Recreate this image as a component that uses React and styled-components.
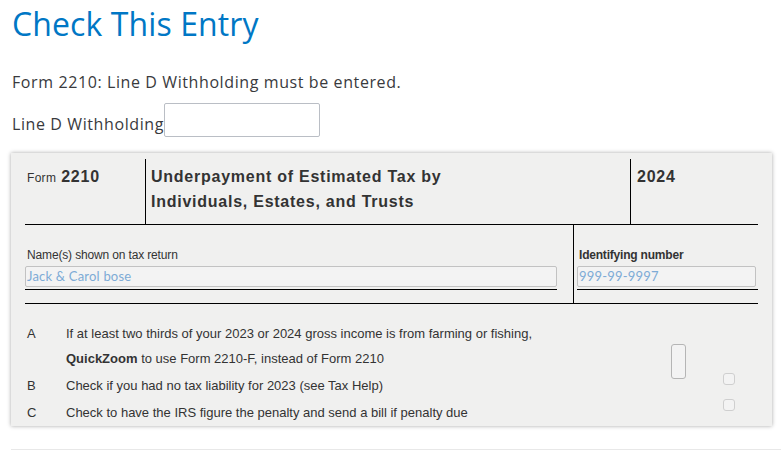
import React from 'react';
import styled, { createGlobalStyle } from 'styled-components';

const GlobalStyle = createGlobalStyle`
	body {
		margin: 0;
		background: #ffffff;
		font-family: 'Open Sans', sans-serif;
	}
`;

const Page = styled.div`
	width: 781px;
	height: 459px;
	overflow: hidden;
	padding-left: 11px;
	box-sizing: border-box;
`;

const Title = styled.h1`
	margin: 4px 0 0 1px;
	font-family: 'Open Sans', sans-serif;
	font-weight: 400;
	font-size: 32px;
	line-height: 40px;
	letter-spacing: 0.1px;
	color: #0077c5;
`;

const Message = styled.p`
	margin: 27px 0 0 1px;
	font-size: 16px;
	line-height: 22px;
	letter-spacing: 0.6px;
	color: #393a3d;
`;

const FieldRow = styled.div`
	display: flex;
	align-items: flex-end;
	margin: 10px 0 0 1px;
`;

const FieldLabel = styled.span`
	font-size: 16px;
	line-height: 22px;
	letter-spacing: 0.6px;
	color: #393a3d;
	margin-bottom: 2px;
`;

const TextBox = styled.input`
	width: 156px;
	height: 34px;
	box-sizing: border-box;
	border: 1px solid #babec5;
	border-radius: 2px;
	background: #fff;
	margin: 0;
`;

const Panel = styled.div`
	margin-top: 16px;
	width: 761px;
	height: 273px;
	box-sizing: border-box;
	background: #f0f0ef;
	box-shadow: 0 0 4px rgba(0, 0, 0, 0.35);
	padding: 6px 14px 0 14px;
	font-family: 'Liberation Sans', Arial, sans-serif;
	color: #333;
`;

const Header = styled.div`
	display: grid;
	grid-template-columns: 120px 485px 1fr;
	height: 66px;
	box-sizing: border-box;
	border-bottom: 1px solid #000;
`;

const HeadCell = styled.div`
	border-left: ${p => (p.$ruled ? '1px solid #000' : 'none')};
	padding: 5px 0 0 ${p => p.$pad}px;
	font-size: 16px;
	line-height: 25px;
	font-weight: 700;
	letter-spacing: 0.75px;
`;

const Small = styled.span`
	font-size: 12px;
	font-weight: 400;
	letter-spacing: 0.3px;
	margin-right: 5px;
`;

const NameRow = styled.div`
	display: grid;
	grid-template-columns: 548px 1fr;
	height: 79px;
	box-sizing: border-box;
	border-bottom: 1px solid #000;
`;

const NameCell = styled.div`
	border-left: ${p => (p.$ruled ? '1px solid #000' : 'none')};
	padding: 23px ${p => p.$right}px 0 ${p => p.$left}px;
`;

const CellLabel = styled.div`
	font-size: 12px;
	line-height: 14px;
	padding-left: 2px;
	font-weight: ${p => (p.$bold ? 700 : 400)};
	letter-spacing: ${p => (p.$bold ? '-0.2px' : '-0.15px')};
`;

const Entry = styled.div`
	margin-top: 4px;
	height: 21px;
	box-sizing: border-box;
	width: ${p => p.$width};
	border: 1px solid #c2c2c2;
	border-radius: 2px;
	background: #f3f3f3;
	font-family: 'Lato', sans-serif;
	font-size: 13px;
	line-height: 19px;
	letter-spacing: 0.2px;
	color: #7eabd6;
	padding-left: 1px;
`;

const Underline = styled.div`
	margin-top: 2px;
	height: 1px;
	background: #000;
`;

const Lines = styled.div`
	display: grid;
	grid-template-columns: 41px 605px 15px 37px 12px;
	grid-template-rows: 51px 27px 27px;
	padding-top: 17px;
	font-size: 13px;
	line-height: 25px;
`;

const Letter = styled.div`
	padding-left: 2px;
	grid-row: ${p => p.$row};
	line-height: ${p => (p.$row === 1 ? 25 : 27)}px;
`;

const LineText = styled.div`
	grid-row: ${p => p.$row};
	line-height: ${p => (p.$row === 1 ? 25 : 27)}px;
	b {
		font-weight: 700;
	}
`;

const ZoomBox = styled.div`
	grid-column: 3;
	grid-row: 1 / 3;
	align-self: start;
	margin-top: 23px;
	height: 35px;
	box-sizing: border-box;
	border: 1px solid #b5b5b5;
	border-radius: 3px;
	background: #f3f3f3;
`;

const Check = styled.div`
	grid-column: 5;
	grid-row: ${p => p.$row};
	align-self: start;
	margin-top: ${p => p.$top}px;
	width: 12px;
	height: 12px;
	box-sizing: border-box;
	border: 1px solid #cfcfcf;
	border-radius: 3px;
	background: #f3f3f3;
`;

const Rule = styled.div`
	margin-top: 23px;
	height: 1px;
	background: #e8e8e8;
`;

const App = () => (
	<Page>
		<GlobalStyle />
		<Title>Check This Entry</Title>
		<Message>Form 2210: Line D Withholding must be entered.</Message>
		<FieldRow>
			<FieldLabel>Line D Withholding</FieldLabel>
			<TextBox />
		</FieldRow>
		<Panel>
			<Header>
				<HeadCell $pad={2}><Small>Form</Small>2210</HeadCell>
				<HeadCell $ruled $pad={5}>
					Underpayment of Estimated Tax by<br />Individuals, Estates, and Trusts
				</HeadCell>
				<HeadCell $ruled $pad={6}>2024</HeadCell>
			</Header>
			<NameRow>
				<NameCell $left={0} $right={16}>
					<CellLabel>Name(s) shown on tax return</CellLabel>
					<Entry $width="532px">Jack &amp; Carol bose</Entry>
					<Underline />
				</NameCell>
				<NameCell $ruled $left={3} $right={0}>
					<CellLabel $bold>Identifying number</CellLabel>
					<Entry $width="179px">999-99-9997</Entry>
					<Underline />
				</NameCell>
			</NameRow>
			<Lines>
				<Letter $row={1}>A</Letter>
				<LineText $row={1}>
					If at least two thirds of your 2023 or 2024 gross income is from farming or fishing,<br />
					<b>QuickZoom</b> to use Form 2210-F, instead of Form 2210
				</LineText>
				<ZoomBox />
				<Letter $row={2}>B</Letter>
				<LineText $row={2}>Check if you had no tax liability for 2023 (see Tax Help)</LineText>
				<Check $row={2} $top={1} />
				<Letter $row={3}>C</Letter>
				<LineText $row={3}>Check to have the IRS figure the penalty and send a bill if penalty due</LineText>
				<Check $row={3} $top={0} />
			</Lines>
		</Panel>
		<Rule />
	</Page>
);

export default App;
